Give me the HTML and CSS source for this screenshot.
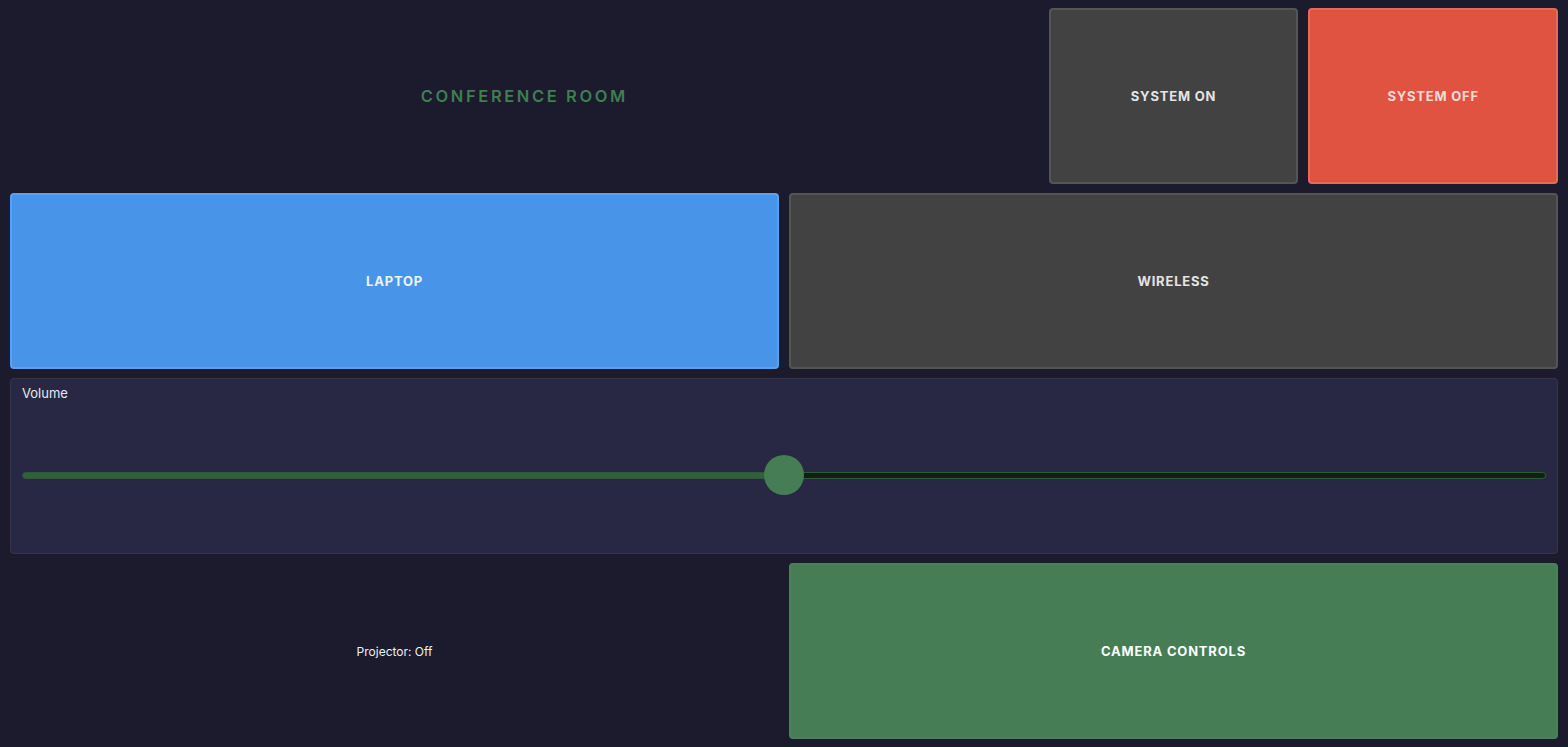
FILE: index.html
```html
<!DOCTYPE html>
<html lang="en">

<head>
    <meta charset="UTF-8">
    <meta name="viewport" content="width=device-width, initial-scale=1.0">
    <title>Conference Room</title>
    <link rel="stylesheet" href="styles.css">
</head>

<body>

    <div class="panel">
        <!-- Header row -->
        <div class="room-title">CONFERENCE ROOM</div>
        <button class="btn">SYSTEM ON</button>
        <button class="btn btn-off">SYSTEM OFF</button>

        <!-- Sources -->
        <button class="btn btn-source btn-active">LAPTOP</button>
        <button class="btn btn-source">WIRELESS</button>

        <!-- Volume -->
        <div class="volume">
            <label class="volume-label" for="volume">Volume</label>
            <div class="volume-track">
                <input type="range" id="volume" min="0" max="100" value="50"
                    style="background: linear-gradient(to right, #2f6239 50%, #0d2211 50%);">
            </div>
        </div>

        <!-- Bottom row -->
        <div class="status">Projector: Off</div>
        <button class="btn btn-source btn-camera">CAMERA CONTROLS</button>
    </div>

</body>

</html>
```

FILE: styles.css
```css
body {
    margin: 0;
    padding: 0;
    background-color: #1b1b2d;
    font-family: Inter, "Noto Sans", Arial, sans-serif;
    color: #e6e6e6;
}

.panel {
    display: grid;
    grid-template-columns: repeat(6, 1fr);
    grid-template-rows: repeat(4, 1fr);
    gap: 9px 10px;
    padding: 8px 10px;
    height: 100vh;
    box-sizing: border-box;
}

.room-title {
    grid-column: span 4;
    display: flex;
    align-items: center;
    justify-content: center;
    color: #3f7f50;
    font-size: 16.5px;
    font-weight: 600;
    letter-spacing: 2.6px;
}

.btn {
    font-family: inherit;
    background-color: #424242;
    border: 2px solid #555555;
    border-radius: 4px;
    color: #e4e4e4;
    font-size: 13px;
    font-weight: 700;
    letter-spacing: 0.8px;
    cursor: pointer;
    padding: 0;
}

.btn-off {
    background-color: #e05341;
    border-color: #e96858;
    color: #f3dcd8;
}

.btn-source {
    grid-column: span 3;
}

.btn-active {
    background-color: #4894e9;
    border-color: #5aa2f0;
    color: #eef3fa;
}

.btn-camera {
    background-color: #467d55;
    border-color: #4c8059;
    color: #ffffff;
}

.volume {
    grid-column: span 6;
    display: flex;
    flex-direction: column;
    background-color: #282844;
    border: 1px solid #38324f;
    border-radius: 4px;
    padding: 6px 11px 12px;
}

.volume-label {
    font-size: 13px;
    color: #e8e8f0;
}

.volume-track {
    flex: 1;
    display: flex;
    align-items: center;
    padding-top: 8px;
}

.volume-track input {
    -webkit-appearance: none;
    appearance: none;
    width: 100%;
    height: 7px;
    margin: 0;
    border: 1px solid #2f5a38;
    border-radius: 4px;
    box-sizing: border-box;
    outline: none;
}

.volume-track input::-webkit-slider-thumb {
    -webkit-appearance: none;
    appearance: none;
    width: 40px;
    height: 40px;
    border-radius: 50%;
    background-color: #467d55;
    border: none;
    cursor: pointer;
}

.status {
    grid-column: span 3;
    display: flex;
    align-items: center;
    justify-content: center;
    font-size: 12px;
    color: #f0f0f0;
}
```
